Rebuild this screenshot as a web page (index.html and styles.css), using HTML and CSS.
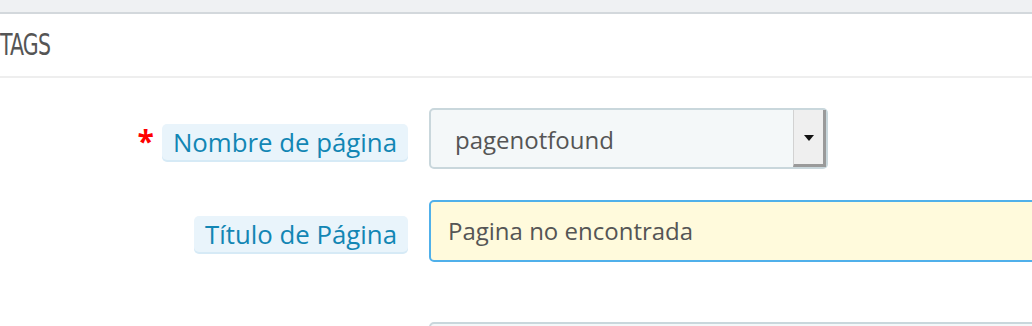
FILE: index.html
```html
<!DOCTYPE html>
<html lang="es">
<head>
    <meta charset="utf-8">
    <title>Tags</title>
    <link rel="stylesheet" href="styles.css">
</head>
<body>
    <div class="top-band"></div>

    <div class="panel">
        <div class="panel-heading"><span class="heading-text">TAGS</span></div>

        <div class="form-row">
            <div class="label-col">
                <span class="required">*</span>
                <span class="label-tip">Nombre de página</span>
            </div>
            <div class="select-box">
                <span class="select-value">pagenotfound</span>
                <span class="select-btn"><span class="caret"></span></span>
            </div>
        </div>

        <div class="form-row row-title">
            <div class="label-col">
                <span class="label-tip">Título de Página</span>
            </div>
            <div class="text-input focused">Pagina no encontrada</div>
        </div>

        <div class="form-row row-next">
            <div class="label-col"></div>
            <div class="text-input"></div>
        </div>
    </div>
</body>
</html>
```

FILE: styles.css
```css
body {
    margin: 0;
    background: #fff;
    font-family: 'Open Sans', sans-serif;
    overflow: hidden;
}
.top-band {
    height: 12px;
    background: #eff1f3;
    border-bottom: 2px solid #d3d8dc;
}
.panel-heading {
    height: 62px;
    line-height: 62px;
    border-bottom: 2px solid #eeeeee;
    font-family: 'DejaVu Sans Condensed', 'DejaVu Sans', sans-serif;
    font-size: 30px;
    color: #555;
}
.heading-text {
    display: inline-block;
    letter-spacing: -1px;
    transform: scaleX(0.76);
    transform-origin: left center;
}
.form-row {
    display: flex;
    align-items: center;
    gap: 21px;
    margin-top: 30px;
}
.row-title {
    margin-top: 31px;
}
.row-next {
    margin-top: 60px;
}
.label-col {
    width: 408px;
    display: flex;
    justify-content: flex-end;
    align-items: center;
    flex-shrink: 0;
}
.required {
    color: #f00;
    font-size: 30px;
    font-weight: bold;
    margin-right: 8px;
    position: relative;
    top: 2px;
}
.label-tip {
    background: #e9f4fb;
    color: #1286b4;
    font-size: 25.8px;
    line-height: 36px;
    padding: 0 11px;
    border-radius: 5px;
    box-shadow: 0 2px 0 #d6eaf6;
    margin-top: 6px;
}
.select-box {
    width: 399px;
    height: 61px;
    box-sizing: border-box;
    border: 2px solid #c9d7dc;
    border-radius: 5px;
    background: #f4f8f9;
    display: flex;
    align-items: stretch;
    flex-shrink: 0;
}
.select-value {
    flex: 1;
    padding-left: 24px;
    padding-top: 3px;
    line-height: 54px;
    font-size: 24px;
    color: #555;
}
.select-btn {
    width: 29px;
    background: #efefef;
    border-left: 1px solid #d2d2d2;
    border-right: 3px solid #9a9a9a;
    border-bottom: 3px solid #9a9a9a;
    display: flex;
    align-items: center;
    justify-content: center;
}
.caret {
    width: 0;
    height: 0;
    border-left: 5px solid transparent;
    border-right: 5px solid transparent;
    border-top: 6px solid #111;
    margin-top: 1px;
}
.text-input {
    width: 700px;
    height: 62px;
    box-sizing: border-box;
    border: 2px solid #c9d7dc;
    border-radius: 5px;
    background: #f4f8f9;
    padding-left: 17px;
    line-height: 58px;
    font-size: 24px;
    color: #555;
    flex-shrink: 0;
}
.text-input.focused {
    border-color: #50b0ea;
    background: #fffadc;
}
```
